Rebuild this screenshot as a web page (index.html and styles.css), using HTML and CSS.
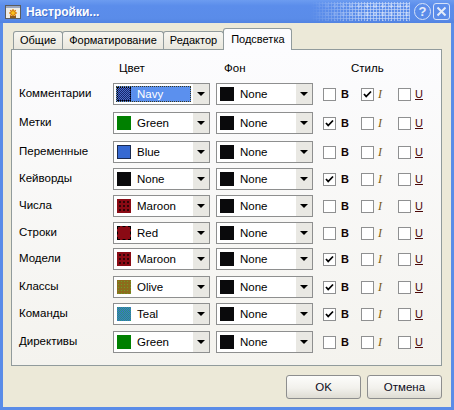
FILE: index.html
```html
<!DOCTYPE html>
<html lang="ru">
<head>
<meta charset="utf-8">
<title>Настройки...</title>
<link rel="stylesheet" href="styles.css">
</head>
<body>
<div class="window">
  <div class="titlebar">
    <svg class="app-icon" width="16" height="16" viewBox="0 0 16 16">
      <rect x="0.5" y="1.5" width="15" height="13" fill="#eeede6" stroke="#5c5c5c"/>
      <rect x="1" y="2" width="14" height="2" fill="#9aa6c0"/>
      <g stroke="#e07a00" stroke-width="1.2">
        <line x1="8" y1="5" x2="8" y2="13"/>
        <line x1="4" y1="9" x2="12" y2="9"/>
        <line x1="5.2" y1="6.2" x2="10.8" y2="11.8"/>
        <line x1="10.8" y1="6.2" x2="5.2" y2="11.8"/>
      </g>
      <circle cx="8" cy="9" r="2.4" fill="#f7c020" stroke="#c86a00" stroke-width="0.8"/>
      <rect x="5" y="12" width="6" height="2" fill="#8a5a20"/>
    </svg>
    <span class="title">Настройки...</span>
    <span class="title-deco"></span>
    <span class="cap-btn cap-help">?</span>
    <span class="cap-btn cap-close">
      <svg width="11" height="11" viewBox="0 0 11 11"><path d="M1.5 1.5 L9.5 9.5 M9.5 1.5 L1.5 9.5" stroke="#e4ecfa" stroke-width="2" fill="none"/></svg>
    </span>
  </div>

  <div class="client">
    <div class="tabs">
      <div class="tab">Общие</div>
      <div class="tab">Форматирование</div>
      <div class="tab">Редактор</div>
      <div class="tab active">Подсветка</div>
    </div>

    <div class="panel">
      <div class="grid">
        <div></div>
        <div class="hdr hdr-color">Цвет</div>
        <div class="hdr hdr-bg">Фон</div>
        <div class="hdr hdr-style">Стиль</div>

        <div class="label">Комментарии</div>
        <div class="combo"><span class="field sel"><span class="sw sw-navy"></span>Navy</span><span class="drop"></span></div>
        <div class="combo"><span class="field"><span class="sw sw-black"></span>None</span><span class="drop"></span></div>
        <div class="styles">
          <span class="opt opt-b"><span class="cb"></span><b class="lb">B</b></span>
          <span class="opt opt-i"><span class="cb on"><svg viewBox="0 0 11 11"><path d="M2 5 L4.2 7.5 L9 2.5" stroke="#000" stroke-width="1.8" fill="none"/></svg></span><i class="li">I</i></span>
          <span class="opt opt-u"><span class="cb"></span><u class="lu">U</u></span>
        </div>

        <div class="label">Метки</div>
        <div class="combo"><span class="field"><span class="sw sw-green"></span>Green</span><span class="drop"></span></div>
        <div class="combo"><span class="field"><span class="sw sw-black"></span>None</span><span class="drop"></span></div>
        <div class="styles">
          <span class="opt opt-b"><span class="cb on"><svg viewBox="0 0 11 11"><path d="M2 5 L4.2 7.5 L9 2.5" stroke="#000" stroke-width="1.8" fill="none"/></svg></span><b class="lb">B</b></span>
          <span class="opt opt-i"><span class="cb"></span><i class="li">I</i></span>
          <span class="opt opt-u"><span class="cb"></span><u class="lu">U</u></span>
        </div>

        <div class="label">Переменные</div>
        <div class="combo"><span class="field"><span class="sw sw-blue"></span>Blue</span><span class="drop"></span></div>
        <div class="combo"><span class="field"><span class="sw sw-black"></span>None</span><span class="drop"></span></div>
        <div class="styles">
          <span class="opt opt-b"><span class="cb"></span><b class="lb">B</b></span>
          <span class="opt opt-i"><span class="cb"></span><i class="li">I</i></span>
          <span class="opt opt-u"><span class="cb"></span><u class="lu">U</u></span>
        </div>

        <div class="label">Кейворды</div>
        <div class="combo"><span class="field"><span class="sw sw-black"></span>None</span><span class="drop"></span></div>
        <div class="combo"><span class="field"><span class="sw sw-black"></span>None</span><span class="drop"></span></div>
        <div class="styles">
          <span class="opt opt-b"><span class="cb on"><svg viewBox="0 0 11 11"><path d="M2 5 L4.2 7.5 L9 2.5" stroke="#000" stroke-width="1.8" fill="none"/></svg></span><b class="lb">B</b></span>
          <span class="opt opt-i"><span class="cb"></span><i class="li">I</i></span>
          <span class="opt opt-u"><span class="cb"></span><u class="lu">U</u></span>
        </div>

        <div class="label">Числа</div>
        <div class="combo"><span class="field"><span class="sw sw-maroon"></span>Maroon</span><span class="drop"></span></div>
        <div class="combo"><span class="field"><span class="sw sw-black"></span>None</span><span class="drop"></span></div>
        <div class="styles">
          <span class="opt opt-b"><span class="cb"></span><b class="lb">B</b></span>
          <span class="opt opt-i"><span class="cb"></span><i class="li">I</i></span>
          <span class="opt opt-u"><span class="cb"></span><u class="lu">U</u></span>
        </div>

        <div class="label">Строки</div>
        <div class="combo"><span class="field"><span class="sw sw-red"></span>Red</span><span class="drop"></span></div>
        <div class="combo"><span class="field"><span class="sw sw-black"></span>None</span><span class="drop"></span></div>
        <div class="styles">
          <span class="opt opt-b"><span class="cb"></span><b class="lb">B</b></span>
          <span class="opt opt-i"><span class="cb"></span><i class="li">I</i></span>
          <span class="opt opt-u"><span class="cb"></span><u class="lu">U</u></span>
        </div>

        <div class="label">Модели</div>
        <div class="combo"><span class="field"><span class="sw sw-maroon"></span>Maroon</span><span class="drop"></span></div>
        <div class="combo"><span class="field"><span class="sw sw-black"></span>None</span><span class="drop"></span></div>
        <div class="styles">
          <span class="opt opt-b"><span class="cb on"><svg viewBox="0 0 11 11"><path d="M2 5 L4.2 7.5 L9 2.5" stroke="#000" stroke-width="1.8" fill="none"/></svg></span><b class="lb">B</b></span>
          <span class="opt opt-i"><span class="cb"></span><i class="li">I</i></span>
          <span class="opt opt-u"><span class="cb"></span><u class="lu">U</u></span>
        </div>

        <div class="label">Классы</div>
        <div class="combo"><span class="field"><span class="sw sw-olive"></span>Olive</span><span class="drop"></span></div>
        <div class="combo"><span class="field"><span class="sw sw-black"></span>None</span><span class="drop"></span></div>
        <div class="styles">
          <span class="opt opt-b"><span class="cb on"><svg viewBox="0 0 11 11"><path d="M2 5 L4.2 7.5 L9 2.5" stroke="#000" stroke-width="1.8" fill="none"/></svg></span><b class="lb">B</b></span>
          <span class="opt opt-i"><span class="cb"></span><i class="li">I</i></span>
          <span class="opt opt-u"><span class="cb"></span><u class="lu">U</u></span>
        </div>

        <div class="label">Команды</div>
        <div class="combo"><span class="field"><span class="sw sw-teal"></span>Teal</span><span class="drop"></span></div>
        <div class="combo"><span class="field"><span class="sw sw-black"></span>None</span><span class="drop"></span></div>
        <div class="styles">
          <span class="opt opt-b"><span class="cb on"><svg viewBox="0 0 11 11"><path d="M2 5 L4.2 7.5 L9 2.5" stroke="#000" stroke-width="1.8" fill="none"/></svg></span><b class="lb">B</b></span>
          <span class="opt opt-i"><span class="cb"></span><i class="li">I</i></span>
          <span class="opt opt-u"><span class="cb"></span><u class="lu">U</u></span>
        </div>

        <div class="label">Директивы</div>
        <div class="combo"><span class="field"><span class="sw sw-green"></span>Green</span><span class="drop"></span></div>
        <div class="combo"><span class="field"><span class="sw sw-black"></span>None</span><span class="drop"></span></div>
        <div class="styles">
          <span class="opt opt-b"><span class="cb"></span><b class="lb">B</b></span>
          <span class="opt opt-i"><span class="cb"></span><i class="li">I</i></span>
          <span class="opt opt-u"><span class="cb"></span><u class="lu">U</u></span>
        </div>
      </div>
    </div>

    <div class="actions">
      <button class="btn">OK</button>
      <button class="btn">Отмена</button>
    </div>
  </div>
</div>
</body>
</html>
```

FILE: styles.css
```css
* { box-sizing: border-box; }
html, body { margin: 0; padding: 0; }
body {
  width: 454px;
  height: 410px;
  overflow: hidden;
  font-family: "Liberation Sans", Arial, sans-serif;
  font-size: 11.5px;
  color: #000;
  background: #fff;
}

.window {
  width: 454px;
  height: 410px;
  display: flex;
  flex-direction: column;
  background: #5a8ce8;
}

/* ---------- title bar ---------- */
.titlebar {
  height: 23px;
  flex: none;
  display: flex;
  align-items: center;
  padding: 0 4px 0 5px;
  color: #fff;
  background: linear-gradient(#6c9cf0, #5b8deb 25%, #5a8ce9 80%, #5283e2);
}
.app-icon { flex: none; margin-right: 5px; }
.title {
  font-weight: bold;
  font-size: 12px;
  text-shadow: 1px 1px 0 rgba(20, 50, 140, .35);
}
.title-deco {
  flex: 1;
  align-self: stretch;
  margin: 2px 4px 2px 0;
  background-image:
    radial-gradient(circle, rgba(255,255,255,.6) 0.9px, transparent 1.3px),
    radial-gradient(circle, rgba(255,255,255,.3) 1.6px, transparent 2px);
  background-size: 3px 3px, 8px 8px;
  -webkit-mask-image: linear-gradient(to right, transparent 68%, #000 86%, #000);
  mask-image: linear-gradient(to right, transparent 68%, #000 86%, #000);
}
.cap-btn {
  flex: none;
  width: 17px;
  height: 17px;
  display: flex;
  align-items: center;
  justify-content: center;
  color: #e4ecfa;
}
.cap-help {
  margin-right: 2px;
  border: 1.5px solid #d6e2f8;
  border-radius: 50%;
  font-weight: bold;
  font-size: 13px;
  line-height: 1;
}
.cap-close {
  border: 1px solid #d6e2f8;
  border-radius: 3px;
}

/* ---------- client ---------- */
.client {
  flex: 1;
  margin: 0 3px 3px;
  background: #ece9d8;
  display: flex;
  flex-direction: column;
}

.tabs {
  height: 26px;
  flex: none;
  display: flex;
  align-items: flex-end;
  padding-left: 10px;
}
.tab {
  height: 18px;
  padding: 0 6px;
  margin-right: -1px;
  border: 1px solid #919b9c;
  border-bottom: none;
  border-radius: 3px 3px 0 0;
  background: linear-gradient(#f7f6f1, #e9e7dd);
  font-size: 11px;
  line-height: 17px;
  white-space: nowrap;
}
.tab.active {
  height: 22px;
  margin-bottom: -1px;
  padding: 2px 6px 0 7px;
  background: #fcfcfe;
  z-index: 1;
}

.panel {
  flex: none;
  margin-left: 8px;
  width: 431px;
  height: 317px;
  border: 1px solid #919b9c;
  background: linear-gradient(#fcfcfe, #f4f3ee);
  padding-left: 7px;
}

.grid {
  display: grid;
  grid-template-columns: 88px 97px 97px 1fr;
  grid-template-rows: 33px 29px 29px 27px 27px 27px 26px 28px 27px 28px 22px;
  column-gap: 6px;
  align-items: start;
}
.hdr { padding-top: 11px; line-height: 14px; }
.hdr-color { padding-left: 6px; }
.hdr-bg { padding-left: 8px; }
.hdr-style { padding-left: 32px; }

.label {
  height: 22px;
  display: flex;
  align-items: center;
  padding-bottom: 2px;
  white-space: nowrap;
}

/* ---------- combo ---------- */
.combo {
  height: 22px;
  display: flex;
  border: 1px solid #8e8f8f;
  background: #fff;
}
.field {
  flex: 1;
  min-width: 0;
  margin: 2px;
  padding-left: 1px;
  display: flex;
  align-items: center;
  gap: 6px;
  white-space: nowrap;
}
.field.sel {
  background: #5b90ee;
  color: #fff;
  outline: 1px dotted #3a3a20;
  outline-offset: -1px;
}
.drop {
  flex: none;
  width: 16px;
  background: #e9e8e3;
  display: flex;
  align-items: center;
  justify-content: center;
}
.drop::after {
  content: "";
  border-left: 4px solid transparent;
  border-right: 4px solid transparent;
  border-top: 4px solid #000;
}

.sw { flex: none; width: 14px; height: 14px; }
.sw-navy {
  border: 1px dotted #000;
  background: repeating-conic-gradient(#15246e 0 25%, #4c6cc6 0 50%) 0 0 / 2px 2px;
}
.sw-green { background: #008000; }
.sw-blue { background: #3669d2; border: 1px solid #1a2a50; }
.sw-black { background: #0a0a0c; }
.sw-maroon {
  background:
    radial-gradient(circle, #000 0.6px, transparent 0.9px) 1px 1px / 4px 4px,
    #8a0a14;
}
.sw-red { background: #8a0a14; border: 1px dashed #000; }
.sw-olive {
  background:
    radial-gradient(circle, #6aa02a 0.7px, transparent 1px) 0 0 / 3px 3px,
    #8c6c1c;
}
.sw-teal {
  background: repeating-conic-gradient(#3a6ed2 0 25%, #2c9a74 0 50%) 0 0 / 2px 2px;
}

/* ---------- style checkboxes ---------- */
.styles {
  height: 22px;
  display: flex;
  align-items: center;
  padding-left: 4px;
}
.opt { display: flex; align-items: center; }
.opt-b { width: 38px; gap: 5px; }
.opt-i { width: 37px; gap: 4px; }
.opt-u { gap: 4px; }
.cb {
  flex: none;
  width: 13px;
  height: 13px;
  border: 1px solid #8f9091;
  background: #fff;
  display: flex;
}
.cb svg { width: 11px; height: 11px; }
.lb { font-weight: bold; font-size: 11px; color: #140404; }
.li {
  font-family: "Liberation Serif", "Times New Roman", serif;
  font-style: italic;
  font-size: 12px;
  color: #7a5a14;
}
.lu { font-size: 11px; color: #4a0808; }

/* ---------- buttons ---------- */
.actions {
  display: flex;
  justify-content: flex-end;
  gap: 6px;
  margin-top: 9px;
  padding-right: 9px;
}
.btn {
  width: 75px;
  height: 24px;
  padding: 0;
  border: 1px solid #8d8e8e;
  border-radius: 3px;
  background: linear-gradient(#fdfdfb, #f2f1ec 55%, #dedcd3);
  font-family: "Liberation Sans", Arial, sans-serif;
  font-size: 11.5px;
  color: #0c0c20;
}
```
